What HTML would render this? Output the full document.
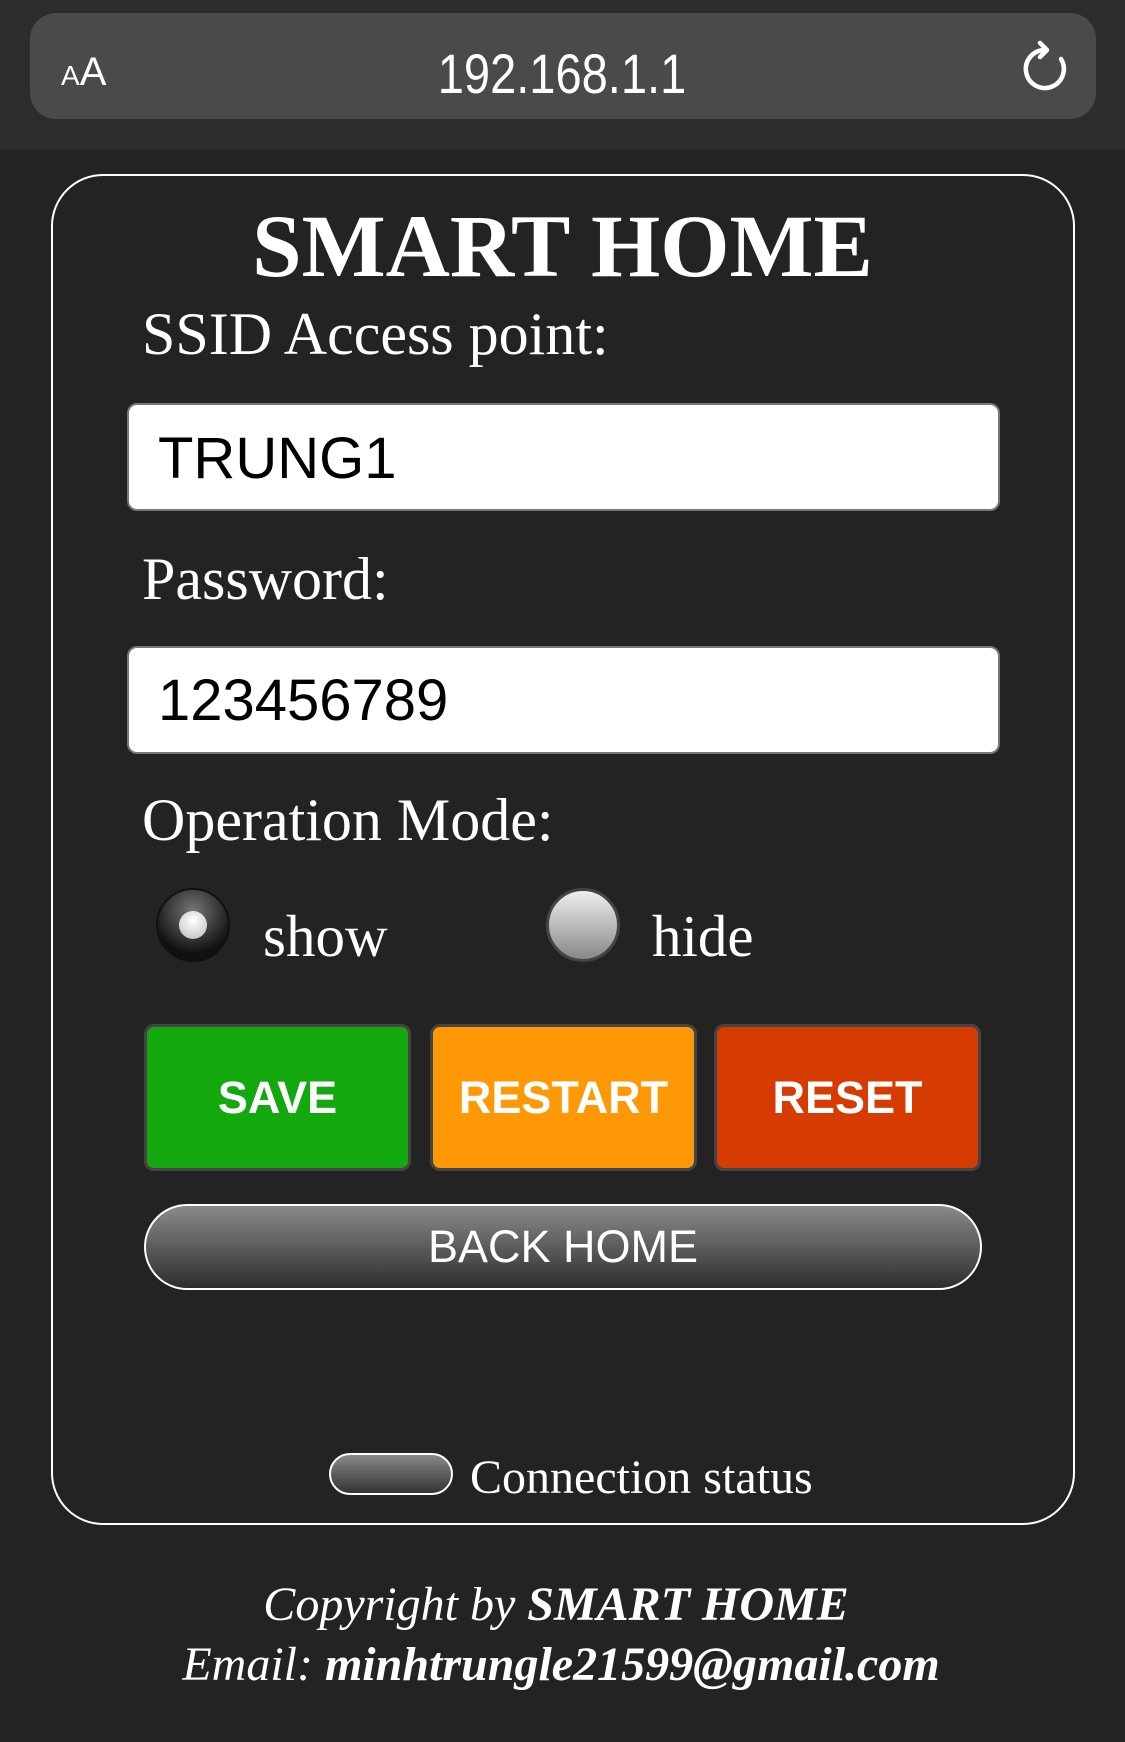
<!DOCTYPE html>
<html><head><meta charset="utf-8"><style>
*{margin:0;padding:0;box-sizing:border-box}
body{width:1125px;height:1742px;background:#232323;position:relative;overflow:hidden;font-family:"Liberation Serif",serif;color:#fff}
.a{position:absolute;white-space:nowrap;line-height:1}
.top{position:absolute;left:0;top:0;width:1125px;height:150px;background:#2c2c2c}
.bar{position:absolute;left:30px;top:13px;width:1066px;height:106px;border-radius:26px;background:#4a4a4a}
.card{position:absolute;left:51px;top:174px;width:1024px;height:1351px;border:2.5px solid #fff;border-radius:52px}
.inp{position:absolute;left:127px;width:873px;height:108px;background:#fff;border:2px solid #777;border-radius:10px}
.btn{position:absolute;top:1024px;height:147px;width:267px;border:3px solid #444;border-radius:10px;font:bold 45px "Liberation Sans",sans-serif;color:#fff;display:flex;align-items:center;justify-content:center}
.lbl{font-size:60px}
</style></head><body>
<div class="top"></div>
<div class="bar"></div>
<div class="a" style="left:61px;top:50px;font:40px 'Liberation Sans',sans-serif;color:#fff"><span style="font-size:28px">A</span>A</div>
<div class="a" style="left:562px;top:41px;font:56px 'Liberation Sans',sans-serif;transform:translateX(-50%) scaleX(0.84);color:#fff">192.168.1.1</div>
<svg class="a" style="left:1020px;top:36px" width="50" height="60" viewBox="0 0 50 60"><path d="M25 14 A19 19 0 1 0 41 23" fill="none" stroke="#fff" stroke-width="4.5" stroke-linecap="round"/><path d="M20 7 L27 14 L20 21" fill="none" stroke="#fff" stroke-width="4.5" stroke-linecap="round" stroke-linejoin="round"/></svg>
<div class="card"></div>
<div class="a" style="left:0;width:1125px;text-align:center;top:203px;font-weight:bold;font-size:89px">SMART HOME</div>
<div class="a lbl" style="left:142px;top:304px">SSID Access point:</div>
<div class="inp" style="top:403px"></div>
<div class="a" style="left:158px;top:425px;font:58px 'Liberation Sans',sans-serif;color:#000">TRUNG1</div>
<div class="a lbl" style="left:142px;top:549px">Password:</div>
<div class="inp" style="top:646px"></div>
<div class="a" style="left:158px;top:667px;font:58px 'Liberation Sans',sans-serif;color:#000">123456789</div>
<div class="a lbl" style="left:142px;top:790px">Operation Mode:</div>
<div class="a" style="left:156px;top:888px;width:74px;height:74px;border-radius:50%;background:radial-gradient(circle at 50% 30%,#777,#111 70%);border:2px solid #111"></div>
<div class="a" style="left:179px;top:911px;width:28px;height:28px;border-radius:50%;background:radial-gradient(circle at 50% 35%,#fff,#bbb)"></div>
<div class="a" style="left:263px;top:907px;font-size:59px">show</div>
<div class="a" style="left:546px;top:888px;width:74px;height:74px;border-radius:50%;background:linear-gradient(#eee,#888);border:3px solid #444"></div>
<div class="a" style="left:652px;top:907px;font-size:59px">hide</div>
<div class="btn" style="left:144px;background:#13a80e">SAVE</div>
<div class="btn" style="left:430px;background:#fe9806">RESTART</div>
<div class="btn" style="left:714px;background:#d63c02">RESET</div>
<div class="a" style="left:144px;top:1204px;width:838px;height:86px;border:2.5px solid #fff;border-radius:43px;background:linear-gradient(#8a8a8a,#2e2e2e);font:45px 'Liberation Sans',sans-serif;display:flex;align-items:center;justify-content:center">BACK HOME</div>
<div class="a" style="left:329px;top:1453px;width:124px;height:42px;border:2.5px solid #fff;border-radius:21px;background:linear-gradient(#888,#333)"></div>
<div class="a" style="left:470px;top:1454px;font-size:48px">Connection status</div>
<div class="a" style="left:0;width:1112px;text-align:center;top:1581px;font-size:48px;font-style:italic">Copyright by <b>SMART HOME</b></div>
<div class="a" style="left:0;width:1122px;text-align:center;top:1641px;font-size:48px;font-style:italic">Email: <b>minhtrungle21599@gmail.com</b></div>
</body></html>
